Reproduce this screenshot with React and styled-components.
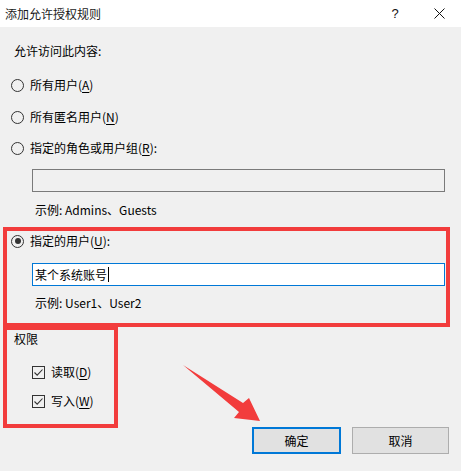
import React from "react";
import styled, { createGlobalStyle } from "styled-components";

const Global = createGlobalStyle`
  html, body { margin: 0; padding: 0; background: #f0f0f0; }
  body {
    font-family: "Noto Sans CJK SC", "Noto Sans", sans-serif;
    font-size: 12px;
    color: #000;
  }
`;

const Window = styled.div`
  position: relative;
  width: 461px;
  height: 471px;
  background: #f0f0f0;
  overflow: hidden;
`;

const TitleBar = styled.div`
  height: 27px;
  background: #fff;
  display: flex;
  align-items: center;
  padding-left: 5px;
`;

const Title = styled.div`
  flex: 1;
  font-size: 12px;
  line-height: 16px;
  color: #1a1a1a;
`;

const TitleButton = styled.div`
  width: 44px;
  height: 27px;
  display: flex;
  align-items: center;
  justify-content: center;
  font-family: "Liberation Sans", sans-serif;
  font-size: 13px;
  color: #111;
`;

const Content = styled.div`
  display: flex;
  flex-direction: column;
`;

const Label = styled.div`
  height: 16px;
  line-height: 16px;
  margin-top: ${(p) => p.$mt || 0}px;
  margin-left: ${(p) => p.$ml || 0}px;
  white-space: nowrap;
`;

const RadioRow = styled.div`
  display: flex;
  align-items: center;
  gap: 6px;
  height: 16px;
  line-height: 16px;
  margin-top: ${(p) => p.$mt || 0}px;
  margin-left: ${(p) => p.$ml || 0}px;
`;

const RadioCircle = styled.span`
  box-sizing: border-box;
  width: 13px;
  height: 13px;
  border: 1px solid #333;
  border-radius: 50%;
  background: #fff0;
  display: flex;
  align-items: center;
  justify-content: center;
  &::after {
    content: "";
    display: ${(p) => (p.$checked ? "block" : "none")};
    width: 6px;
    height: 6px;
    border-radius: 50%;
    background: #333;
  }
`;

const Key = styled.span`
  text-decoration: underline;
  text-underline-offset: 2px;
`;

const TextBox = styled.div`
  box-sizing: border-box;
  width: 413px;
  height: 23px;
  margin-top: ${(p) => p.$mt || 0}px;
  margin-left: ${(p) => p.$ml || 0}px;
  border: 1px solid ${(p) => (p.$focused ? "#0078d7" : "#7a7a7a")};
  background: ${(p) => (p.$disabled ? "#f0f0f0" : "#fff")};
  display: flex;
  align-items: center;
  padding-left: 2px;
  font-size: 12px;
  line-height: 16px;
`;

const Caret = styled.span`
  display: inline-block;
  width: 1px;
  height: 15px;
  background: #000;
  margin-left: 1px;
`;

const RedBox = styled.div`
  box-sizing: border-box;
  border: 4px solid #f23c3c;
  width: ${(p) => p.$w}px;
  height: ${(p) => p.$h}px;
  margin-top: ${(p) => p.$mt || 0}px;
  margin-left: 3px;
  display: flex;
  flex-direction: column;
`;

const BottomRow = styled.div`
  display: flex;
  align-items: flex-start;
  margin-top: -1px;
`;

const CheckRow = styled.div`
  display: flex;
  align-items: center;
  gap: 6px;
  height: 16px;
  line-height: 16px;
  margin-top: ${(p) => p.$mt || 0}px;
  margin-left: 25px;
`;

const CheckBox = styled.span`
  box-sizing: border-box;
  width: 13px;
  height: 13px;
  border: 1px solid #333;
  background: #fff0;
  display: flex;
  align-items: center;
  justify-content: center;
`;

const Buttons = styled.div`
  display: flex;
  gap: 11px;
  margin-top: 101px;
  margin-left: 134px;
`;

const Button = styled.div`
  box-sizing: border-box;
  width: ${(p) => p.$w}px;
  height: 27px;
  border: ${(p) => (p.$default ? "2px solid #0078d7" : "1px solid #adadad")};
  background: #e1e1e1;
  display: flex;
  align-items: center;
  justify-content: center;
  font-size: 12px;
  line-height: 16px;
`;

const Overlay = styled.svg`
  position: absolute;
  left: 0;
  top: 0;
  pointer-events: none;
`;

const Check = () => (
  <svg width="11" height="11" viewBox="0 0 11 11">
    <polyline points="1.5,5.5 4.2,8.2 9.5,2.5" fill="none" stroke="#333" strokeWidth="1.1" />
  </svg>
);

export default function App() {
  return (
    <Window>
      <Global />
      <TitleBar>
        <Title>添加允许授权规则</Title>
        <TitleButton>?</TitleButton>
        <TitleButton>
          <svg width="11" height="11" viewBox="0 0 11 11">
            <path d="M0.5 0.5 L10.5 10.5 M10.5 0.5 L0.5 10.5" stroke="#111" strokeWidth="1" />
          </svg>
        </TitleButton>
      </TitleBar>
      <Content>
        <Label $mt={16} $ml={14}>允许访问此内容:</Label>
        <RadioRow $mt={18} $ml={11}>
          <RadioCircle />
          <span>所有用户(<Key>A</Key>)</span>
        </RadioRow>
        <RadioRow $mt={16} $ml={11}>
          <RadioCircle />
          <span>所有匿名用户(<Key>N</Key>)</span>
        </RadioRow>
        <RadioRow $mt={15} $ml={11}>
          <RadioCircle />
          <span>指定的角色或用户组(<Key>R</Key>):</span>
        </RadioRow>
        <TextBox $mt={13} $ml={32} $disabled />
        <Label $mt={10} $ml={35}>示例: Admins、Guests</Label>
        <RedBox $w={447} $h={100} $mt={9}>
          <RadioRow $mt={2} $ml={4}>
            <RadioCircle $checked />
            <span>指定的用户(<Key>U</Key>):</span>
          </RadioRow>
          <TextBox $mt={14} $ml={25} $focused>
            某个系统账号<Caret />
          </TextBox>
          <Label $mt={9} $ml={28}>示例: User1、User2</Label>
        </RedBox>
        <BottomRow>
          <RedBox $w={115} $h={102}>
            <Label $mt={1} $ml={7}>权限</Label>
            <CheckRow $mt={17}>
              <CheckBox><Check /></CheckBox>
              <span>读取(<Key>D</Key>)</span>
            </CheckRow>
            <CheckRow $mt={13}>
              <CheckBox><Check /></CheckBox>
              <span>写入(<Key>W</Key>)</span>
            </CheckRow>
          </RedBox>
          <Buttons>
            <Button $w={89} $default>确定</Button>
            <Button $w={97}>取消</Button>
          </Buttons>
        </BottomRow>
      </Content>
      <Overlay width="461" height="471" viewBox="0 0 461 471">
        <polygon points="183,365 243,403 249,398 260,421 234,418 239,412" fill="#f23c3c" />
      </Overlay>
    </Window>
  );
}
